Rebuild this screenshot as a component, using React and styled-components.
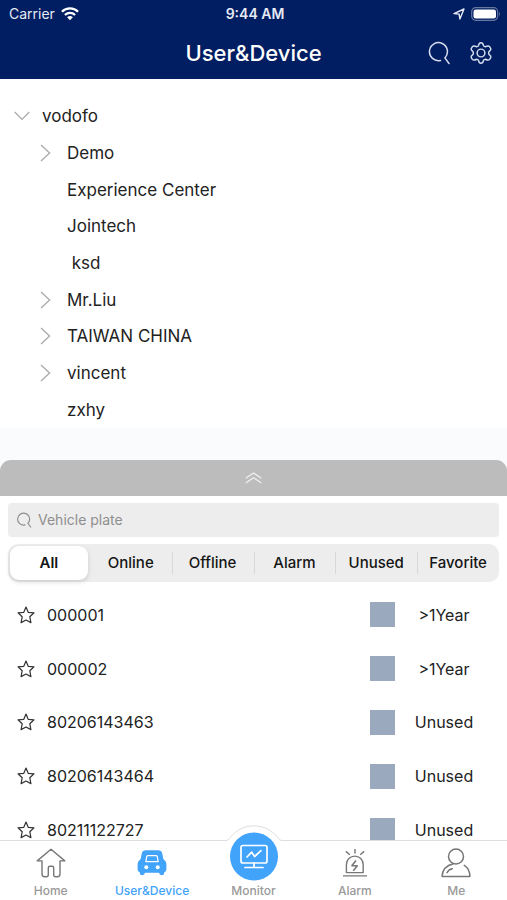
import React, { useState } from "react";
import styled, { createGlobalStyle, css } from "styled-components";

const GlobalStyle = createGlobalStyle`
  *, *::before, *::after { box-sizing: border-box; }
  body {
    margin: 0;
    background: #fff;
    color: #222;
    font-family: Inter, Roboto, "Liberation Sans", sans-serif;
  }
  button, input { font: inherit; color: inherit; }
  button { border: 0; padding: 0; background: none; cursor: pointer; }
  svg { display: block; flex: none; }
`;

const Screen = styled.div`
  display: flex;
  flex-direction: column;
  height: 100vh;
  overflow: hidden;
`;

const TopBar = styled.header`
  flex: none;
  background: #001e61;
  color: #fff;
`;

const StatusBar = styled.div`
  display: grid;
  grid-template-columns: 1fr auto 1fr;
  align-items: center;
  height: 28px;
  padding: 0 6px 0 9px;
  font-size: 14px;
  line-height: 20px;
  color: #e6eaf4;
`;

const StatusGroup = styled.div`
  display: flex;
  align-items: center;
  gap: 6px;
  justify-content: ${(p) => (p.$end ? "flex-end" : "flex-start")};
`;

const Clock = styled.time`
  font-weight: 600;
`;

const TitleRow = styled.div`
  display: grid;
  grid-template-columns: 1fr auto 1fr;
  align-items: center;
  height: 51px;
  padding: 0 14px 2px;
`;

const Title = styled.h1`
  grid-column: 2;
  margin: 0;
  font-size: 22px;
  line-height: 28px;
  font-weight: 500;
`;

const Actions = styled.div`
  display: flex;
  justify-content: flex-end;
  gap: 18px;
`;

const IconButton = styled.button`
  display: flex;
  align-items: center;
  justify-content: center;
`;

const TreePanel = styled.nav`
  flex: none;
  padding: 19px 0 0;
`;

const Tree = styled.ul`
  display: grid;
  grid-auto-rows: 1fr;
  height: 330px;
  margin: 0;
  padding: 0;
  list-style: none;
`;

const TreeRow = styled.li`
  display: grid;
  grid-template-columns: 24px 1fr;
  align-items: center;
  column-gap: 4px;
  padding-left: ${(p) => (p.$nested ? 39 : 14)}px;
`;

const TreeLabel = styled.button`
  grid-column: 2;
  justify-self: start;
  font-size: 17px;
  line-height: 24px;
  white-space: pre;
`;

const DrawerGap = styled.div`
  flex: none;
  height: 32px;
  background: #fafbfd;
`;

const DrawerTop = styled.div`
  flex: none;
  background: #fafbfd;
`;

const DrawerHandle = styled.button`
  display: flex;
  align-items: center;
  justify-content: center;
  width: 100%;
  height: 36px;
  border-radius: 11px 11px 0 0;
  background: #bcbcbc;
`;

const Filters = styled.div`
  flex: none;
  display: grid;
  gap: 7px;
  padding: 7px 8px 0;
`;

const SearchField = styled.label`
  display: flex;
  align-items: center;
  gap: 6px;
  height: 34px;
  padding: 0 8px;
  border-radius: 4px;
  background: #ededed;
`;

const SearchInput = styled.input`
  flex: 1;
  min-width: 0;
  padding: 0;
  border: 0;
  outline: 0;
  background: none;
  font-size: 14px;
  line-height: 20px;
  &::placeholder { color: #8f8f8f; opacity: 1; }
`;

const Segments = styled.div`
  display: grid;
  grid-template-columns: repeat(6, 1fr);
  height: 38px;
  padding: 2px 0;
  border-radius: 10px;
  background: #ededed;
`;

const SegmentCell = styled.div`
  display: grid;
  background: ${(p) =>
    p.$divided
      ? "linear-gradient(#d8d8d8, #d8d8d8) left center / 1px 22px no-repeat"
      : "none"};
`;

const Segment = styled.button`
  display: flex;
  align-items: center;
  justify-content: center;
  margin: 0 2px;
  border-radius: 9px;
  font-size: 15px;
  line-height: 20px;
  font-weight: ${(p) => (p.$active ? 600 : 500)};
  color: #151515;
  ${(p) =>
    p.$active &&
    css`
      background: #fff;
      box-shadow: 0 2px 5px rgba(0, 0, 0, 0.14);
    `}
`;

const DeviceScroller = styled.main`
  flex: 1;
  min-height: 0;
  padding-top: 6px;
  overflow-y: auto;
  scrollbar-width: none;
`;

const DeviceList = styled.ul`
  display: grid;
  grid-auto-rows: 1fr;
  height: 269px;
  margin: 0;
  padding: 0;
  list-style: none;
`;

const DeviceRow = styled.li`
  display: grid;
  grid-template-columns: 18px 1fr 26px 96px;
  align-items: center;
  padding: 0 15px 0 17px;
  font-size: 16px;
  line-height: 22px;
`;

const DeviceName = styled.span`
  padding-left: 12px;
`;

const StatusSwatch = styled.span`
  width: 25px;
  height: 25px;
  background: #9ba9be;
`;

const Expiry = styled.span`
  text-align: center;
`;

const TabBar = styled.nav`
  flex: none;
  position: relative;
  display: grid;
  grid-template-columns: repeat(5, 1fr);
  height: 60px;
  border-top: 1px solid #dedede;
  background: #fff;
`;

const Tab = styled.a`
  display: flex;
  flex-direction: column;
  align-items: center;
  justify-content: flex-end;
  gap: 5px;
  padding-bottom: 1px;
  font-size: 12px;
  line-height: 16px;
  font-weight: 500;
  text-decoration: none;
  color: ${(p) => (p.$active ? "#42a3fb" : "#999")};
`;

const RaisedDisc = styled.span`
  position: absolute;
  bottom: 13px;
  left: 50%;
  transform: translateX(-50%);
`;

function WifiIcon() {
  return (
    <svg width="18" height="14" viewBox="0 0 18 14" fill="none" stroke="#fff" strokeWidth="2.3" aria-hidden="true">
      <path d="M.9 4.7C5.4.3 12.6.3 17.1 4.7" />
      <path d="M3.9 8C6.8 5.2 11.2 5.2 14.1 8" />
      <path d="M6.1 10.3C7.8 8.7 10.2 8.7 11.9 10.3L9 13.3Z" fill="#fff" stroke="none" />
    </svg>
  );
}

function LocationIcon() {
  return (
    <svg width="12" height="12" viewBox="0 0 12 12" fill="none" stroke="#e6eaf4" strokeWidth="1.4" strokeLinejoin="round" aria-hidden="true">
      <path d="M1 5.6 11 1 6.9 11 6.1 6.1Z" />
    </svg>
  );
}

function BatteryIcon() {
  return (
    <svg width="30" height="14" viewBox="0 0 30 14" aria-hidden="true">
      <rect x=".7" y=".7" width="26" height="12.6" rx="4" fill="none" stroke="#6877a0" strokeWidth="1.2" />
      <rect x="2.5" y="2.5" width="22.5" height="9" rx="2.3" fill="#fff" />
      <path d="M28 4.6q1.8 2.4 0 4.8Z" fill="#6877a0" />
    </svg>
  );
}

function SearchIcon({ size, color, stroke }) {
  return (
    <svg width={size} height={size} viewBox="0 0 24 24" fill="none" stroke={color} strokeWidth={stroke} strokeLinecap="round" aria-hidden="true">
      <path d="M13.5 19.4A9 9 0 1 1 17.9 16.9L22 22.5" />
    </svg>
  );
}

function GearIcon() {
  return (
    <svg width="24" height="24" viewBox="-1 -1 26 26" fill="none" stroke="#d5dced" strokeWidth="1.6" strokeLinejoin="round" aria-hidden="true">
      <path d="M9.5 3.5Q9.9 1 12 1t2.5 2.5Q14.8 5 16.7 5.2 20 3.6 21.3 5.1 23.6 8.2 22 9.1 20.2 10.4 20.2 12t1.8 2.9Q23.6 15.8 21.3 18.9 20 20.4 16.7 18.8 14.8 19 14.5 20.5 14.1 23 12 23T9.5 20.5Q9.2 19 7.3 18.8 4 20.4 2.7 18.9.4 15.8 2 14.9 3.8 13.6 3.8 12T2 9.1Q.4 8.2 2.7 5.1 4 3.6 7.3 5.2 9.2 5 9.5 3.5Z" />
      <circle cx="12" cy="12" r="4.2" />
    </svg>
  );
}

function Chevron({ open }) {
  return open ? (
    <svg width="16" height="10" viewBox="0 0 16 10" fill="none" stroke="#aaa" strokeWidth="1.3" aria-hidden="true">
      <path d="M.7 1 8 8.4 15.3 1" />
    </svg>
  ) : (
    <svg width="12" height="18" viewBox="0 0 12 18" fill="none" stroke="#aaa" strokeWidth="1.3" aria-hidden="true">
      <path d="M2 1 10.6 9 2 17" />
    </svg>
  );
}

function DoubleChevronUp() {
  return (
    <svg width="17" height="12" viewBox="0 0 17 12" fill="none" stroke="#f2f2f2" strokeWidth="1.2" aria-hidden="true">
      <path d="M.7 6.3 8.5 1 16.3 6.3M.7 11 8.5 5.7 16.3 11" />
    </svg>
  );
}

function StarIcon() {
  return (
    <svg width="18" height="18" viewBox="0 0 18 18" fill="none" stroke="#333" strokeWidth="1.2" strokeLinejoin="round" aria-hidden="true">
      <path d="M9 1 11.2 6.3 17 6.8 12.8 10.7 13.9 16.6 9 14 4.1 16.6 5.2 10.7 1 6.8 6.8 6.3Z" />
    </svg>
  );
}

function HomeIcon() {
  return (
    <svg width="30" height="30" viewBox="0 0 30 30" fill="none" stroke="#777" strokeWidth="1.4" strokeLinejoin="round" aria-hidden="true">
      <path d="M15 1.3 1.2 12.9H6V26q0 2.7 2.7 2.7h1.7q1.9 0 1.9-1.9v-7q0-1.6 1.6-1.6h2.2q1.6 0 1.6 1.6v7q0 1.9 1.9 1.9h1.7Q24 28.7 24 26V12.9h4.8Z" />
    </svg>
  );
}

function CarIcon() {
  return (
    <svg width="30" height="30" viewBox="0 0 30 30" aria-hidden="true">
      <path d="M9 2.2h12q3.6 0 4.2 3l1.2 6q3 1.8 3 5.4v4.600q0 2.800-2.200 3.200v.6q0 2.200-2.400 2.200t-2.800-2.400H8Q7.600 27.200 5.200 27.200T2.800 25v-.6Q.6 24 .6 21.200v-4.600q0-3.600 3-5.400l1.200-6q.6-3 4.200-3Z" fill="#42a3fb" />
      <path d="M10.800 7.600h8.400q.8 0 1 .8l1 5.200H8.800l1-5.200q.2-.8 1-.8Z" fill="none" stroke="#fff" strokeWidth="1.200" strokeLinejoin="round" />
      <circle cx="9.300" cy="19.200" r="2" fill="#fff" />
      <circle cx="20.700" cy="19.200" r="2" fill="#fff" />
    </svg>
  );
}

function AlarmIcon() {
  return (
    <svg width="30" height="30" viewBox="0 0 30 30" fill="none" stroke="#777" strokeWidth="1.4" strokeLinejoin="round" aria-hidden="true">
      <path d="M3 27.9h24M6.4 24.6V16.5a8.4 8.4 0 0 1 16.8 0v8.1ZM15 1v4.5M5.8 3.4l4 3.3M24.2 3.4l-4 3.3" />
      <path d="M16 12.5 12 17.6l5.3.2-4 5" strokeWidth="1.6" />
    </svg>
  );
}

function PersonIcon() {
  return (
    <svg width="30" height="30" viewBox="0 0 30 30" fill="none" stroke="#777" strokeWidth="1.5" strokeLinecap="round" strokeLinejoin="round" aria-hidden="true">
      <circle cx="15" cy="8.5" r="7.5" />
      <path d="M12.4 15.7C6 17.2 1.4 21 1.1 28.4H28.9Q28.8 20.6 23.3 17.3" />
      <path d="M6 24.8Q7.4 21.5 11.3 20.7" />
    </svg>
  );
}

function MonitorDisc() {
  return (
    <svg width="62" height="62" viewBox="0 0 62 62" fill="none" aria-hidden="true">
      <path d="M3 15.5Q5 15.5 6.5 13.5A30 30 0 0 1 55.5 13.5Q57 15.5 59 15.5V17H3Z" fill="#fff" />
      <path d="M3 15.5Q5 15.5 6.5 13.5A30 30 0 0 1 55.5 13.5Q57 15.5 59 15.5" stroke="#dedede" />
      <circle cx="31" cy="31.5" r="24" fill="#42a3fb" />
      <g stroke="#fff" strokeWidth="1.7" strokeLinejoin="round" strokeLinecap="round">
        <rect x="18" y="20.5" width="26" height="17.5" rx="2" />
        <path d="M31 38v4M22 42.5h18M24 32l4.700-4.800 2.900 4.300 6.400-5.800" />
      </g>
    </svg>
  );
}

const treeNodes = [
  { name: "vodofo", open: true, root: true, branch: true },
  { name: "Demo", branch: true },
  { name: "Experience Center" },
  { name: "Jointech" },
  { name: " ksd" },
  { name: "Mr.Liu", branch: true },
  { name: "TAIWAN CHINA", branch: true },
  { name: "vincent", branch: true },
  { name: "zxhy" },
];

const segments = ["All", "Online", "Offline", "Alarm", "Unused", "Favorite"];

const devices = [
  ["000001", ">1Year"],
  ["000002", ">1Year"],
  ["80206143463", "Unused"],
  ["80206143464", "Unused"],
  ["80211122727", "Unused"],
];

export default function App() {
  const [active, setActive] = useState(0);
  return (
    <Screen>
      <GlobalStyle />
      <TopBar>
        <StatusBar>
          <StatusGroup>
            Carrier
            <WifiIcon />
          </StatusGroup>
          <Clock>9:44 AM</Clock>
          <StatusGroup $end>
            <LocationIcon />
            <BatteryIcon />
          </StatusGroup>
        </StatusBar>
        <TitleRow>
          <Title>User&amp;Device</Title>
          <Actions>
            <IconButton aria-label="Search">
              <SearchIcon size={24} color="#d5dced" stroke={1.5} />
            </IconButton>
            <IconButton aria-label="Settings">
              <GearIcon />
            </IconButton>
          </Actions>
        </TitleRow>
      </TopBar>

      <TreePanel aria-label="Users">
        <Tree>
          {treeNodes.map((node) => (
            <TreeRow key={node.name} $nested={!node.root}>
              {node.branch && <Chevron open={node.open} />}
              <TreeLabel>{node.name}</TreeLabel>
            </TreeRow>
          ))}
        </Tree>
      </TreePanel>

      <DrawerGap />
      <DrawerTop>
        <DrawerHandle aria-label="Expand device list">
          <DoubleChevronUp />
        </DrawerHandle>
      </DrawerTop>

      <Filters>
        <SearchField>
          <SearchIcon size={16} color="#8f8f8f" stroke={1.8} />
          <SearchInput type="text" placeholder="Vehicle plate" aria-label="Vehicle plate" />
        </SearchField>
        <Segments role="group" aria-label="Device status">
          {segments.map((label, i) => (
            <SegmentCell key={label} $divided={i > 0 && i !== active && i !== active + 1}>
              <Segment $active={i === active} aria-pressed={i === active} onClick={() => setActive(i)}>
                {label}
              </Segment>
            </SegmentCell>
          ))}
        </Segments>
      </Filters>

      <DeviceScroller>
        <DeviceList>
          {devices.map(([name, expiry]) => (
            <DeviceRow key={name}>
              <IconButton aria-label={`Favorite ${name}`}>
                <StarIcon />
              </IconButton>
              <DeviceName>{name}</DeviceName>
              <StatusSwatch />
              <Expiry>{expiry}</Expiry>
            </DeviceRow>
          ))}
        </DeviceList>
      </DeviceScroller>

      <TabBar aria-label="Main">
        <Tab href="#home">
          <HomeIcon />
          Home
        </Tab>
        <Tab href="#devices" $active aria-current="page">
          <CarIcon />
          User&amp;Device
        </Tab>
        <Tab href="#monitor">
          <RaisedDisc>
            <MonitorDisc />
          </RaisedDisc>
          Monitor
        </Tab>
        <Tab href="#alarm">
          <AlarmIcon />
          Alarm
        </Tab>
        <Tab href="#me">
          <PersonIcon />
          Me
        </Tab>
      </TabBar>
    </Screen>
  );
}
